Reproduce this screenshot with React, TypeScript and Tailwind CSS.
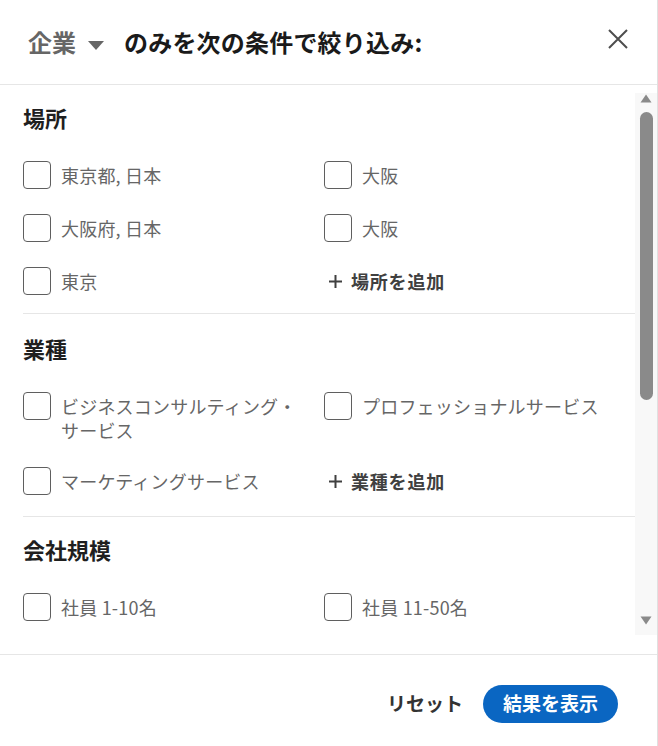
import React from "react";

type Option = { label: string };

type Section = {
  title: string;
  options: Option[];
  addLabel?: string;
  pt: string;
  pb: string;
};

const sections: Section[] = [
  {
    title: "場所",
    options: [
      { label: "東京都, 日本" },
      { label: "大阪" },
      { label: "大阪府, 日本" },
      { label: "大阪" },
      { label: "東京" },
    ],
    addLabel: "場所を追加",
    pt: "pt-[18px]",
    pb: "pb-[18px]",
  },
  {
    title: "業種",
    options: [
      { label: "ビジネスコンサルティング・サービス" },
      { label: "プロフェッショナルサービス" },
      { label: "マーケティングサービス" },
    ],
    addLabel: "業種を追加",
    pt: "pt-[20px]",
    pb: "pb-[21px]",
  },
  {
    title: "会社規模",
    options: [{ label: "社員 1-10名" }, { label: "社員 11-50名" }],
    pt: "pt-[18px]",
    pb: "pb-0",
  },
];

function Checkbox() {
  return (
    <span className="block size-7 shrink-0 rounded-[4px] border border-[#5f5f5f] bg-white" />
  );
}

function CheckItem({ label }: Option) {
  return (
    <label className="flex items-start gap-2.5">
      <Checkbox />
      <span className="pt-[2px] text-[18px] leading-6 tracking-[0.2px] text-[#666666]">{label}</span>
    </label>
  );
}

function AddButton({ label }: { label: string }) {
  return (
    <button className="flex h-7 items-center gap-[9px] pl-[5px] text-[18px] font-bold tracking-[0.8px] text-[#404040]">
      <svg width="13" height="13" viewBox="0 0 13 13" aria-hidden>
        <path d="M6.5 0v13M0 6.5h13" stroke="#404040" strokeWidth="2" />
      </svg>
      {label}
    </button>
  );
}

function FilterSection({ section, last }: { section: Section; last?: boolean }) {
  return (
    <div className={`${section.pt} ${section.pb} ${last ? "" : "border-b border-[#e6e6e6]"}`}>
      <h3 className="text-[22px] font-bold leading-7 text-[#1f1f1f]">{section.title}</h3>
      <div className="mt-[30px] grid grid-cols-[285px_1fr] gap-x-4 gap-y-[25px]">
        {section.options.map((o, i) => (
          <CheckItem key={i} label={o.label} />
        ))}
        {section.addLabel && <AddButton label={section.addLabel} />}
      </div>
    </div>
  );
}

function Scrollbar() {
  return (
    <div className="mt-2 mb-[19px] flex w-[22px] shrink-0 flex-col items-center bg-[#f8f8f8]">
      <svg width="12" height="9" viewBox="0 0 12 9" className="mt-[1px]" aria-hidden>
        <path d="M6 0.5 L11.5 8.5 H0.5 Z" fill="#8a8a8a" />
      </svg>
      <div className="mt-[9px] ml-[1px] h-[288px] w-[13px] rounded-full bg-[#8a8a8a]" />
      <div className="flex-1" />
      <svg width="12" height="9" viewBox="0 0 12 9" className="mb-[10px]" aria-hidden>
        <path d="M0.5 0.5 H11.5 L6 8.5 Z" fill="#8a8a8a" />
      </svg>
    </div>
  );
}

export default function App() {
  return (
    <div
      className="flex h-[746px] w-[658px] flex-col overflow-hidden border-r border-[#e0e0e0] bg-white"
      style={{ fontFamily: '"Noto Sans CJK JP", "Noto Sans", sans-serif' }}
    >
      <header className="flex h-[85px] shrink-0 items-center border-b border-[#e6e6e6] pl-7">
        <span className="text-[24px] font-bold leading-8 text-[#666666]">企業</span>
        <svg width="16" height="9" viewBox="0 0 16 9" className="ml-3 mt-[6px]" aria-hidden>
          <path d="M0 0 H16 L8 9 Z" fill="#666666" />
        </svg>
        <h2 className="ml-5 text-[24px] font-bold leading-8 tracking-[0.2px] text-[#1a1a1a]">
          のみを次の条件で絞り込み:
        </h2>
        <button className="ml-auto mr-[29px] -mt-[6px]" aria-label="閉じる">
          <svg width="20" height="20" viewBox="0 0 20 20">
            <path d="M1 1 L19 19 M19 1 L1 19" stroke="#4d4d4d" strokeWidth="2" />
          </svg>
        </button>
      </header>

      <div className="flex min-h-0 flex-1">
        <div className="min-w-0 flex-1 overflow-hidden pl-[23px]">
          {sections.map((s, i) => (
            <FilterSection key={s.title} section={s} last={i === sections.length - 1} />
          ))}
        </div>
        <Scrollbar />
      </div>

      <footer className="flex h-[92px] shrink-0 items-center justify-end gap-5 border-t border-[#e6e6e6] pr-[39px] pt-1.5">
        <button className="text-[19px] font-bold text-[#333333]">リセット</button>
        <button className="h-[38px] rounded-full bg-[#0a66c2] px-5 text-[19px] font-bold text-white">
          結果を表示
        </button>
      </footer>
    </div>
  );
}
